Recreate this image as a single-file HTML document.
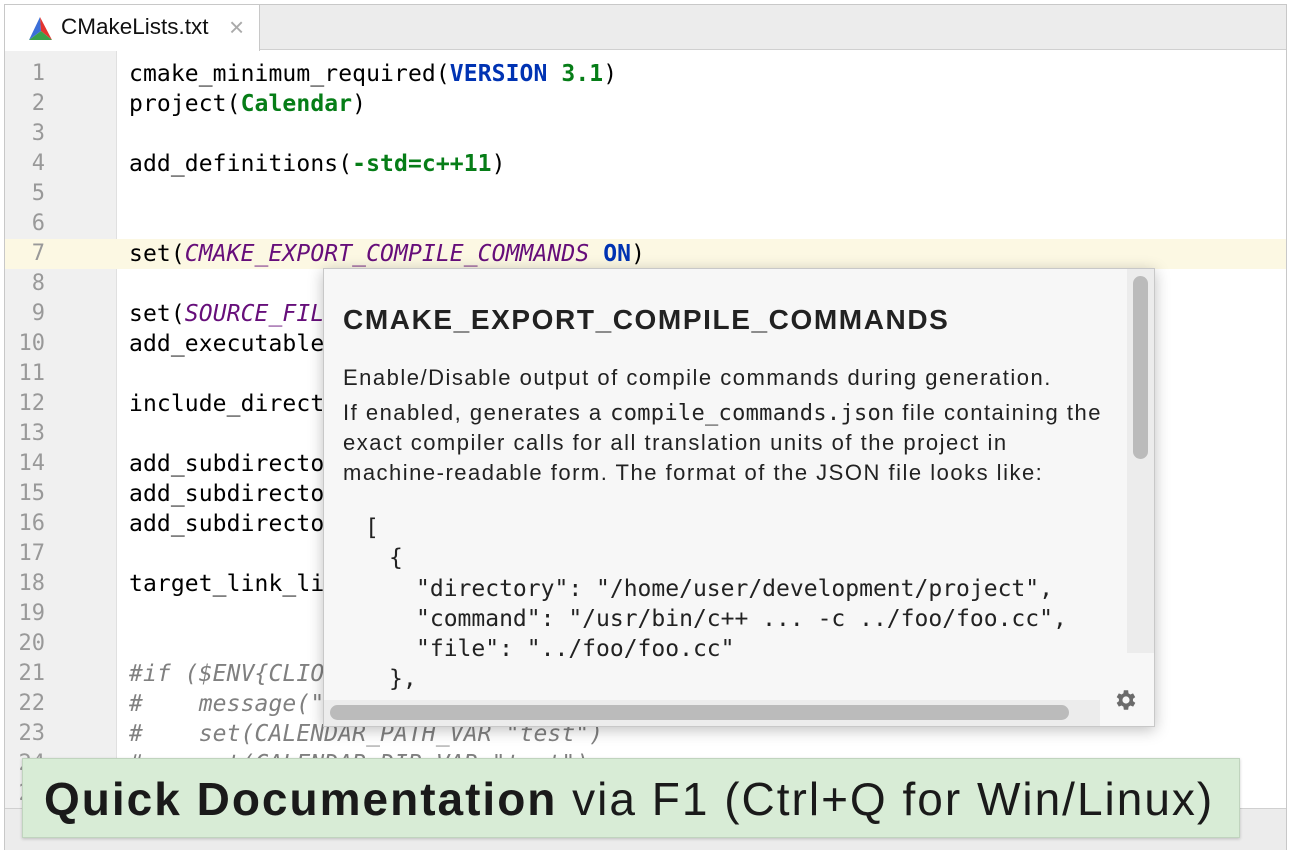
<!DOCTYPE html>
<html><head><meta charset="utf-8"><style>
*{margin:0;padding:0;box-sizing:border-box}
body{width:1293px;height:855px;background:#fff;position:relative;overflow:hidden;font-family:"Liberation Sans",sans-serif}
.frame{position:absolute;left:4px;top:4px;width:1283px;height:846px;border:1px solid #c8c8c8;background:#fff}
.tabbar{position:absolute;left:5px;top:5px;width:1281px;height:45px;background:#ececec;border-bottom:1px solid #d0d0d0}
.tab{position:absolute;left:5px;top:5px;width:255px;height:46px;background:#fff;border-right:1px solid #c8c8c8}
.gutter{position:absolute;left:5px;top:51px;width:112px;height:757px;background:#f0f0f0;border-right:1px solid #e0e0e0}
.bottom{position:absolute;left:5px;top:808px;width:1281px;height:42px;background:#ececec;border-top:1px solid #d0d0d0}
.ln{position:absolute;left:5px;width:40px;text-align:right;font:22px "DejaVu Sans Mono",monospace;color:#999;height:30px;line-height:30px}
.code{position:absolute;left:129px;font:23px "DejaVu Sans Mono","Liberation Mono",monospace;letter-spacing:0.1px;color:#000;height:30px;line-height:30px;white-space:pre}
.g{color:#067d17;font-weight:bold}.b{color:#0033b3;font-weight:bold}.p{color:#660e7a;font-style:italic}.c{color:#808080;font-style:italic}
.hl{position:absolute;left:5px;top:239px;width:1281px;height:30px;background:#fcf8e3}
.pop{position:absolute;left:323px;top:268px;width:832px;height:459px;background:#f7f7f7;border:1px solid #c8c8c8;box-shadow:0 3px 14px rgba(0,0,0,.25);overflow:hidden}
.pop .t{position:absolute;left:19px;top:35px;font:bold 28px "Liberation Sans",sans-serif;letter-spacing:1.6px;color:#222}
.pop .s{position:absolute;left:19px;font:22px "Liberation Sans",sans-serif;letter-spacing:1.5px;color:#222;white-space:nowrap;height:30px;line-height:30px}
.pop .m{position:absolute;font:23px "DejaVu Sans Mono",monospace;color:#222;white-space:pre;height:30px;line-height:30px}
.banner{position:absolute;left:22px;top:758px;width:1218px;height:80px;background:#d8ecd6;border:1px solid #c0d4be;box-shadow:0 1px 3px rgba(0,0,0,.2);font:46px "Liberation Sans",sans-serif;letter-spacing:2px;color:#1a1a1a;padding-left:21px;line-height:80px;white-space:nowrap}
</style></head><body>
<div class="frame"></div>
<div class="tabbar"></div>
<div class="tab">
<svg style="position:absolute;left:20px;top:8px" width="30" height="30" viewBox="0 0 30 30"><polygon points="15,4 4,27 16,18" fill="#3c6fd8"/><polygon points="15,4 16,18 27,27" fill="#e3342f"/><polygon points="4,27 16,18 27,27" fill="#3aa04a"/></svg>
<span style="position:absolute;left:56px;top:9px;font-size:22.5px;color:#111">CMakeLists.txt</span>
<span style="position:absolute;left:224px;top:7px;font-size:26px;color:#aaa">×</span>
</div>
<div class="gutter"></div>
<div class="hl"></div>
<div class="bottom"></div>
<div class="code" style="top:59px">cmake_minimum_required(<span class="b">VERSION</span> <span class="g">3.1</span>)</div>
<div class="code" style="top:89px">project(<span class="g">Calendar</span>)</div>
<div class="code" style="top:149px">add_definitions(<span class="g">-std=c++11</span>)</div>
<div class="code" style="top:239px">set(<span class="p">CMAKE_EXPORT_COMPILE_COMMANDS</span> <span class="b">ON</span>)</div>
<div class="code" style="top:299px">set(<span class="p">SOURCE_FIL</span></div>
<div class="code" style="top:329px">add_executable</div>
<div class="code" style="top:389px">include_direct</div>
<div class="code" style="top:449px">add_subdirecto</div>
<div class="code" style="top:479px">add_subdirecto</div>
<div class="code" style="top:509px">add_subdirecto</div>
<div class="code" style="top:569px">target_link_li</div>
<div class="code c" style="top:659px">#if ($ENV{CLIO</div>
<div class="code c" style="top:689px">#    message("</div>
<div class="code c" style="top:719px">#    set(CALENDAR_PATH_VAR "test")</div>
<div class="code c" style="top:749px">#    set(CALENDAR_DIR_VAR "test")</div>
<div class="code c" style="top:779px">#endif()</div>
<div class="ln" style="top:59px">1</div><div class="ln" style="top:89px">2</div><div class="ln" style="top:119px">3</div><div class="ln" style="top:149px">4</div><div class="ln" style="top:179px">5</div><div class="ln" style="top:209px">6</div><div class="ln" style="top:239px">7</div><div class="ln" style="top:269px">8</div><div class="ln" style="top:299px">9</div><div class="ln" style="top:329px">10</div><div class="ln" style="top:359px">11</div><div class="ln" style="top:389px">12</div><div class="ln" style="top:419px">13</div><div class="ln" style="top:449px">14</div><div class="ln" style="top:479px">15</div><div class="ln" style="top:509px">16</div><div class="ln" style="top:539px">17</div><div class="ln" style="top:569px">18</div><div class="ln" style="top:599px">19</div><div class="ln" style="top:629px">20</div><div class="ln" style="top:659px">21</div><div class="ln" style="top:689px">22</div><div class="ln" style="top:719px">23</div><div class="ln" style="top:749px">24</div><div class="ln" style="top:779px">25</div>
<div class="pop">
<div class="t">CMAKE_EXPORT_COMPILE_COMMANDS</div>
<div class="s" style="top:94px">Enable/Disable output of compile commands during generation.</div>
<div class="s" style="top:129px">If enabled, generates a <span style="font:22px 'DejaVu Sans Mono',monospace;letter-spacing:0.3px">compile_commands.json</span> file containing the</div>
<div class="s" style="top:159px">exact compiler calls for all translation units of the project in</div>
<div class="s" style="top:189px">machine-readable form. The format of the JSON file looks like:</div>
<div class="m" style="left:41px;top:244px">[</div>
<div class="m" style="left:65px;top:274px">{</div>
<div class="m" style="left:92px;top:305px">"directory": "/home/user/development/project",</div>
<div class="m" style="left:92px;top:335px">"command": "/usr/bin/c++ ... -c ../foo/foo.cc",</div>
<div class="m" style="left:92px;top:365px">"file": "../foo/foo.cc"</div>
<div class="m" style="left:65px;top:395px">},</div>
<div style="position:absolute;left:803px;top:0;width:28px;height:384px;background:#ececec"></div>
<div style="position:absolute;left:809px;top:7px;width:15px;height:183px;background:#bbb;border-radius:8px"></div>
<div style="position:absolute;left:0;top:431px;width:776px;height:28px;background:#ececec"></div>
<div style="position:absolute;left:6px;top:436px;width:739px;height:15px;background:#bbb;border-radius:8px"></div>
<svg style="position:absolute;left:789px;top:418px" width="26" height="26" viewBox="0 0 24 24"><path fill="#6b6b6b" d="M19.4 13a7.5 7.5 0 000-2l2.1-1.6-2-3.5-2.5 1a7.5 7.5 0 00-1.7-1L15 3h-4l-.4 2.9a7.5 7.5 0 00-1.7 1l-2.5-1-2 3.5L6.5 11a7.5 7.5 0 000 2l-2.1 1.6 2 3.5 2.5-1a7.5 7.5 0 001.7 1L11 21h4l.4-2.9a7.5 7.5 0 001.7-1l2.5 1 2-3.5zM13 15.3a3.3 3.3 0 110-6.6 3.3 3.3 0 010 6.6z" transform="translate(-1 0)"/></svg>
</div>
<div class="banner"><b>Quick Documentation</b> via F1 (Ctrl+Q for Win/Linux)</div>
</body></html>
